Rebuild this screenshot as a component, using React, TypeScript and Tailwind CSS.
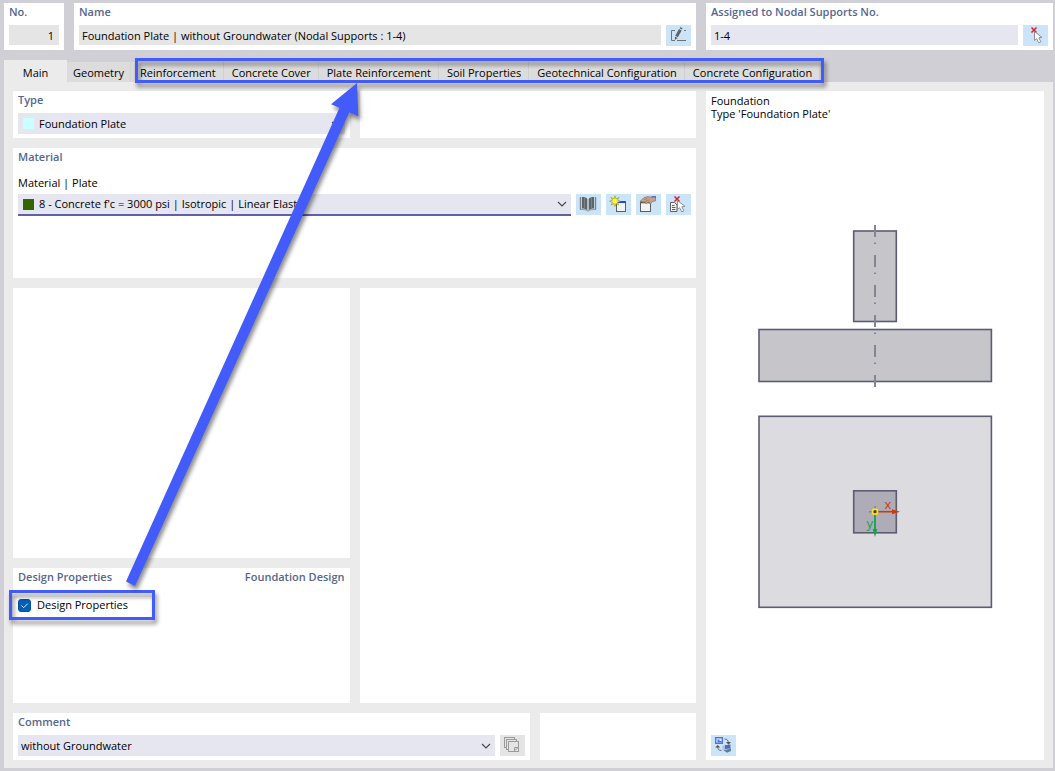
import type { ReactNode } from "react";

const fieldHeight = "h-[21px]";

function Panel({ title, extra, className = "", children }: { title?: ReactNode; extra?: string; className?: string; children?: ReactNode }) {
  return (
    <section className={`bg-white px-[5px] pb-1 ${className}`}>
      {title && (
        <div className="mb-1 flex justify-between font-semibold leading-[18px] text-[#56668f]">
          <h2>{title}</h2>
          {extra && <span>{extra}</span>}
        </div>
      )}
      {children}
    </section>
  );
}

function IconButton({ label, disabled, children }: { label: string; disabled?: boolean; children: ReactNode }) {
  return (
    <button
      type="button"
      aria-label={label}
      disabled={disabled}
      className={`${fieldHeight} w-[25px] shrink-0 ${disabled ? "bg-[#e5e5e5]" : "bg-[#cce4f7]"}`}
    >
      <svg width="25" height="21" viewBox="0 0 25 21" fill="none" aria-hidden="true">
        {children}
      </svg>
    </button>
  );
}

function Dropdown({ id, value, swatch, focused }: { id: string; value: string; swatch?: string; focused?: boolean }) {
  return (
    <div className={`relative flex min-w-0 flex-1 items-center bg-[#e6e6f1] ${focused ? "h-[22px] border-b-2 border-[#615fa8]" : fieldHeight}`}>
      {swatch && <span className={`ml-[5px] size-[11px] shrink-0 ${swatch}`} />}
      <select
        id={id}
        className={`h-full w-full min-w-0 appearance-none bg-transparent pr-5 outline-none ${swatch ? "pl-[5px]" : "pl-[3px]"}`}
      >
        <option>{value}</option>
      </select>
      <svg className="pointer-events-none absolute right-1" width="10" height="6" viewBox="0 0 10 6" fill="none" aria-hidden="true">
        <path d="M1 1l4 4 4-4" stroke="#444" strokeWidth="1.1" />
      </svg>
    </div>
  );
}

function RedCross() {
  return <path d="M8.5 2.5l5 5M13.5 2.5l-5 5" stroke="#e01b2e" strokeWidth="1.5" />;
}

function Cursor() {
  return (
    <path
      d="M11.5 6.5v9l2.1-1.8 2.2 4.2 2.1-1.1-2.1-4 3.2-.4z"
      fill="#fff"
      stroke="#85858a"
      strokeWidth="0.9"
    />
  );
}

const tabs = [
  "Reinforcement",
  "Concrete Cover",
  "Plate Reinforcement",
  "Soil Properties",
  "Geotechnical Configuration",
  "Concrete Configuration",
];

function Tabs() {
  return (
    <nav role="tablist" className="flex h-[22px] items-end">
      <button type="button" role="tab" aria-selected="true" className="h-[22px] w-[63px] bg-[#ebebeb] pt-1">
        Main
      </button>
      <button type="button" role="tab" aria-selected="false" className="h-5 w-16 border-r border-[#d3d3d3] bg-[#dcdcdc] pt-[2px]">
        Geometry
      </button>
      <div className="relative flex bg-[#dcdcdc] pl-px">
        {tabs.map((tab) => (
          <button
            key={tab}
            type="button"
            role="tab"
            aria-selected="false"
            className="h-5 whitespace-nowrap border-r border-[#d0d0d0] bg-[#dcdcdc] pl-2 pr-[7px] pt-[2px]"
          >
            {tab}
          </button>
        ))}
        <span className="pointer-events-none absolute -bottom-px -right-1 -top-1 left-1 z-10 border-[3px] border-[#425bfa] drop-shadow-[2px_4px_2px_rgba(0,0,0,0.45)]" />
      </div>
    </nav>
  );
}

function FoundationDrawing() {
  return (
    <svg width="236" height="386" viewBox="757 223 236 386" role="img" aria-label="Foundation plate section and plan">
      <g stroke="#5d5d72" strokeWidth="1.6">
        <rect x="853.7" y="231" width="42.6" height="90.5" fill="#c5c5ca" />
        <rect x="759" y="329.5" width="232.4" height="52" fill="#c5c5ca" />
        <rect x="759" y="416.3" width="232.4" height="191" fill="#dcdbe0" />
        <rect x="853.7" y="490.8" width="42.6" height="42" fill="#adacb7" />
      </g>
      <path d="M875 225v163" stroke="#858494" strokeWidth="2" strokeDasharray="12 5.5 1.5 11" />
      <path d="M869 511.7h6M875 506v6" stroke="#858494" strokeWidth="1.6" />
      <path d="M875 511.7h18" stroke="#cf3a0c" strokeWidth="1.6" />
      <path d="M892 509.2l8 2.5-8 2.5z" fill="#cf3a0c" />
      <path d="M875 512v18" stroke="#10a450" strokeWidth="1.8" />
      <path d="M872.7 529h4.6l-2.3 8z" fill="#10a450" />
      <circle cx="875" cy="511.7" r="2.5" fill="#3c3c60" stroke="#ffe500" strokeWidth="1.7" />
      <text x="884.5" y="509" fontSize="13" fill="#cf3a0c">x</text>
      <text x="866.5" y="528" fontSize="13" fill="#10a450">y</text>
    </svg>
  );
}

export default function App() {
  return (
    <div className="relative flex min-h-screen flex-col overflow-hidden bg-[#d0cfd5] py-[3px] pl-1 pr-[2px] font-['Open_Sans','Noto_Sans',sans-serif] text-[11px] leading-[18px] text-black">
      <header className="mb-[10px] flex gap-[10px]">
        <Panel title={<label htmlFor="no">No.</label>} className="w-[60px] shrink-0">
          <input id="no" readOnly defaultValue="1" className="block h-5 w-full bg-[#e5e5e5] pr-[5px] text-right outline-none" />
        </Panel>
        <Panel title={<label htmlFor="name">Name</label>} className="min-w-0 flex-1">
          <div className="flex h-[21px] gap-[5px]">
            <input
              id="name"
              readOnly
              defaultValue="Foundation Plate | without Groundwater (Nodal Supports : 1-4)"
              className="h-5 min-w-0 flex-1 bg-[#e5e5e5] pl-[3px] outline-none"
            />
            <IconButton label="Edit name">
              <path d="M9 5.5H5.5v10H9M11 15.5h9M18 5.5h2" stroke="#6e7376" />
              <path d="M10.6 11.5L14.3 4.8" stroke="#606467" strokeWidth="3" />
              <path d="M14.8 3.8l.6-1.1" stroke="#606467" strokeWidth="2.6" />
              <path d="M9 11.5l-.2 3.6 2.9-2z" fill="#606467" />
            </IconButton>
          </div>
        </Panel>
        <Panel title={<label htmlFor="assigned">Assigned to Nodal Supports No.</label>} className="w-[347px] shrink-0">
          <div className="flex h-[21px] gap-[5px]">
            <input id="assigned" defaultValue="1-4" className="h-5 min-w-0 flex-1 bg-[#e6e6f1] pl-[3px] outline-none" />
            <IconButton label="Select supports">
              <RedCross />
              <Cursor />
            </IconButton>
          </div>
        </Panel>
      </header>

      <Tabs />

      <main className="flex flex-1 gap-[10px] bg-[#ebebeb] px-[9px] pb-2 pt-[9px]">
        <div className="flex min-w-0 flex-1 flex-col gap-[10px]">
          <div className="grid grid-cols-2 gap-[10px]">
            <Panel title={<label htmlFor="type">Type</label>}>
              <div className="flex">
                <Dropdown id="type" value="Foundation Plate" swatch="bg-[#ccffff]" />
              </div>
            </Panel>
            <Panel />
          </div>

          <Panel title="Material" className="h-[130px]">
            <label htmlFor="material" className="mb-[2px] block pt-1">
              Material | Plate
            </label>
            <div className="flex gap-[5px]">
              <Dropdown id="material" value="8 - Concrete f'c = 3000 psi | Isotropic | Linear Elastic" swatch="bg-[#336600]" focused />
              <IconButton label="Material library">
                <path d="M4.5 3v12.5M19.5 3v12.5" stroke="#7b8489" strokeWidth="1.4" />
                <path d="M6 3c2.500 0 4.500.6 5.300 2v11.500C10 15.200 8 14.600 6 14.600z" fill="#5f6467" />
                <path d="M18 3c-2.500 0-4.500.6-5.300 2v11.500c1.300-1.300 3.300-1.900 5.300-1.900z" fill="#5f6467" />
                <path d="M8.500 4v10.500M15.500 4v10.500" stroke="#83898c" strokeWidth="0.8" />
                <path d="M4 15.500c3.500-.2 6.500.2 8 1.700 1.500-1.500 4.500-1.900 8-1.700" stroke="#7b8489" strokeWidth="0.8" />
              </IconButton>
              <IconButton label="New material">
                <rect x="10.5" y="7.5" width="9" height="10" fill="#f3f3f3" stroke="#5c5f61" />
                <path d="M11 8h8.500" stroke="#2443e8" strokeWidth="2" />
                <path
                  d="M9 1.800l1 3.200 3-1.600-1.600 2.800 3.200 1-3.200 1 1.400 2.800-2.900-1.400-.9 2.900-1-2.900L5.200 11l1.400-2.800-3-1 3-1L5 3.400 8 5z"
                  fill="#fff23d"
                  stroke="#928f22"
                  strokeWidth="0.6"
                />
              </IconButton>
              <IconButton label="Edit material">
                <path d="M15.500 3.500H20" stroke="#2443e8" strokeWidth="2.500" />
                <rect x="4.500" y="8" width="10" height="9.500" fill="#f3f3f3" stroke="#5c5f61" />
                <path d="M4 8.500h11" stroke="#5c5f61" strokeWidth="1.600" />
                <path
                  d="M4.500 7L8 3.500l4-1 4 .800 3.500-.300v4L16 7.500l-1 2.200-1.700-.400.200-1.400-2 .400-1.200 1.500-1.200-1 .900-1.200-2.500.500z"
                  fill="#c9a283"
                  stroke="#8c7666"
                  strokeWidth="0.7"
                />
                <path d="M8 5.500l3.500-1M10 6.800l3.500-1" stroke="#8c7666" strokeWidth="0.7" />
              </IconButton>
              <IconButton label="Select material in model">
                <RedCross />
                <path d="M4.500 8.500h4l2.500 2.500v6.500H4.500z" fill="#f3f3f3" stroke="#5c5f61" />
                <path d="M6 11.500h2.500M6 13.500h3.500M6 15.500h3.500" stroke="#5c5f61" />
                <Cursor />
              </IconButton>
            </div>
          </Panel>

          <div className="grid flex-1 grid-cols-2 gap-[10px]">
            <div className="flex flex-col gap-[10px]">
              <Panel className="flex-1" />
              <Panel title="Design Properties" extra="Foundation Design" className="h-[135px]">
                <div className="relative mr-auto flex h-[30px] w-fit items-center">
                  <label className="flex items-center gap-[6px]">
                    <input
                      type="checkbox"
                      defaultChecked
                      className="peer size-[13px] appearance-none rounded-[3px] border border-[#0055a5] bg-[#005fb8]"
                    />
                    <span>Design Properties</span>
                    <svg className="pointer-events-none absolute left-0 hidden peer-checked:block" width="13" height="13" viewBox="0 0 13 13" fill="none" aria-hidden="true">
                      <path d="M3.500 6.500l2.200 2.200 4-4" stroke="#dcecfa" />
                    </svg>
                  </label>
                  <span className="pointer-events-none absolute -left-[9px] -right-[27px] bottom-0 top-0 border-[3px] border-[#425bfa] drop-shadow-[2px_4px_2px_rgba(0,0,0,0.45)]" />
                </div>
              </Panel>
            </div>
            <Panel />
          </div>

          <div className="flex gap-[10px]">
            <Panel title={<label htmlFor="comment">Comment</label>} className="min-w-0 flex-1">
              <div className="flex gap-[5px]">
                <Dropdown id="comment" value="without Groundwater" />
                <IconButton label="Comment templates" disabled>
                  <g fill="#e5e5e5" stroke="#9b9b9b">
                    <rect x="4.5" y="2.5" width="10" height="10" />
                    <rect x="6.5" y="4.5" width="10" height="10" />
                    <rect x="8.5" y="6.5" width="10" height="10" />
                    <path d="M14.5 16.5v-4h4" />
                    <path d="M15 15.5l3-3" />
                  </g>
                </IconButton>
              </div>
            </Panel>
            <Panel className="w-[156px] shrink-0" />
          </div>
        </div>

        <aside className="flex w-[338px] shrink-0 flex-col bg-white px-[5px] pb-1 pt-[3px]">
          <p className="leading-[13px]">
            Foundation
            <br />
            Type 'Foundation Plate'
          </p>
          <div className="mt-[103px] flex justify-center">
            <FoundationDrawing />
          </div>
          <div className="mt-auto flex">
            <IconButton label="Switch picture">
              <rect x="4.7" y="2.7" width="6.6" height="5.6" fill="#e4eeff" stroke="#4b74e0" strokeWidth="1.4" />
              <path d="M6.500 4.500v3h4V6h-2V4.500z" fill="#4b74e0" />
              <path d="M13.500 4c2.500 0 3.800 1.200 3.800 3.500M10.500 15.500c-2.500 0-3.800-1-3.800-3.500" stroke="#6c6c70" />
              <path d="M15 7h5l-2.500 2.700zM4.200 12.500h5L6.700 10z" fill="#54545a" />
              <path d="M11.500 11l3-1.500v6l-3-1z" fill="#a9c0e6" />
              <path d="M14 10.200l5.500-.7v4l-5.500.5z" fill="#4e6fa9" />
              <path d="M12.500 15.200l7.500-1.700V16l-4 1.700z" fill="#67799c" />
            </IconButton>
          </div>
        </aside>
      </main>

      <svg className="pointer-events-none absolute left-0 top-0 z-20 drop-shadow-[2px_4px_2px_rgba(0,0,0,0.45)]" width="370" height="600" viewBox="0 0 370 600" aria-hidden="true">
        <path d="M126 581.5L339.500 107.800 331 104.200 357 83l1.300 33.300-9-4L135 586z" fill="#425bfa" />
      </svg>
    </div>
  );
}
